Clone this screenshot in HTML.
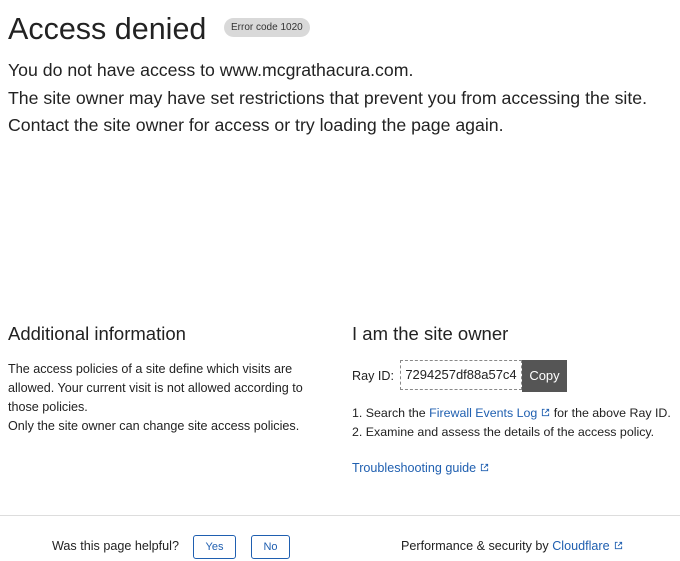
<!DOCTYPE html>
<html><head><style>
body{margin:0;width:680px;height:561px;overflow:hidden;font-family:"Liberation Sans",sans-serif;color:#313131;background:#fff;position:relative}
.a{position:absolute;white-space:nowrap}
h1{position:absolute;left:8px;top:9px;margin:0;font-size:30.5px;font-weight:400;line-height:40px;color:#222}
.badge{position:absolute;left:224px;top:18px;height:19px;padding:0 7px;border-radius:10px;background:#d9d9d9;font-size:10px;line-height:19px;color:#333}
.lead{position:absolute;left:8px;top:57px;font-size:17.7px;line-height:27.5px;color:#222}
h2{position:absolute;margin:0;font-size:18.5px;font-weight:400;color:#222;top:323px}
.p{font-size:12.6px;line-height:19px;color:#222}
a{color:#1f5fb0;text-decoration:none}
.ic{display:inline-block;width:9px;height:9px;vertical-align:0px;margin-left:4px}
.ray{position:absolute;left:400px;top:360px;width:122px;height:30px;border:1px dashed #888;box-sizing:border-box;font-size:13px;line-height:28px;text-align:center;color:#222}
.copy{position:absolute;left:522px;top:360px;width:45px;height:32px;background:#555;color:#fff;font-size:13px;line-height:32px;text-align:center}
.btn{position:absolute;top:535px;height:24px;border:1px solid #1f5fb0;border-radius:3px;box-sizing:border-box;font-size:11px;line-height:22px;text-align:center;color:#1f5fb0}
</style></head><body>
<h1>Access denied</h1>
<div class="badge">Error code 1020</div>
<div class="lead">You do not have access to www.mcgrathacura.com.<br>The site owner may have set restrictions that prevent you from accessing the site.<br>Contact the site owner for access or try loading the page again.</div>
<h2 style="left:8px">Additional information</h2>
<div class="a p" style="left:8px;top:360px">The access policies of a site define which visits are<br>allowed. Your current visit is not allowed according to<br>those policies.<br>Only the site owner can change site access policies.</div>
<h2 style="left:352px">I am the site owner</h2>
<div class="a p" style="left:352px;top:367px">Ray ID:</div>
<div class="ray">7294257df88a57c4</div>
<div class="copy">Copy</div>
<div class="a p" style="left:352px;top:404px;font-size:12.4px">1. Search the <a>Firewall Events Log<svg class="ic" viewBox="0 0 10 10" fill="none" stroke="#1f5fb0" stroke-width="1"><path d="M4 1.5H1.5v7h7V6M6 1.5h2.5V4M8.5 1.5L4.5 5.5"/></svg></a> for the above Ray ID.<br>2. Examine and assess the details of the access policy.</div>
<div class="a p" style="left:352px;top:459px"><a>Troubleshooting guide<svg class="ic" viewBox="0 0 10 10" fill="none" stroke="#1f5fb0" stroke-width="1"><path d="M4 1.5H1.5v7h7V6M6 1.5h2.5V4M8.5 1.5L4.5 5.5"/></svg></a></div>
<div class="a" style="left:0;top:515px;width:680px;border-top:1px solid #ddd"></div>
<div class="a p" style="left:52px;top:537px">Was this page helpful?</div>
<div class="btn" style="left:193px;width:43px">Yes</div>
<div class="btn" style="left:251px;width:39px">No</div>
<div class="a p" style="left:401px;top:537px">Performance &amp; security by <a>Cloudflare<svg class="ic" viewBox="0 0 10 10" fill="none" stroke="#1f5fb0" stroke-width="1"><path d="M4 1.5H1.5v7h7V6M6 1.5h2.5V4M8.5 1.5L4.5 5.5"/></svg></a></div>
</body></html>
